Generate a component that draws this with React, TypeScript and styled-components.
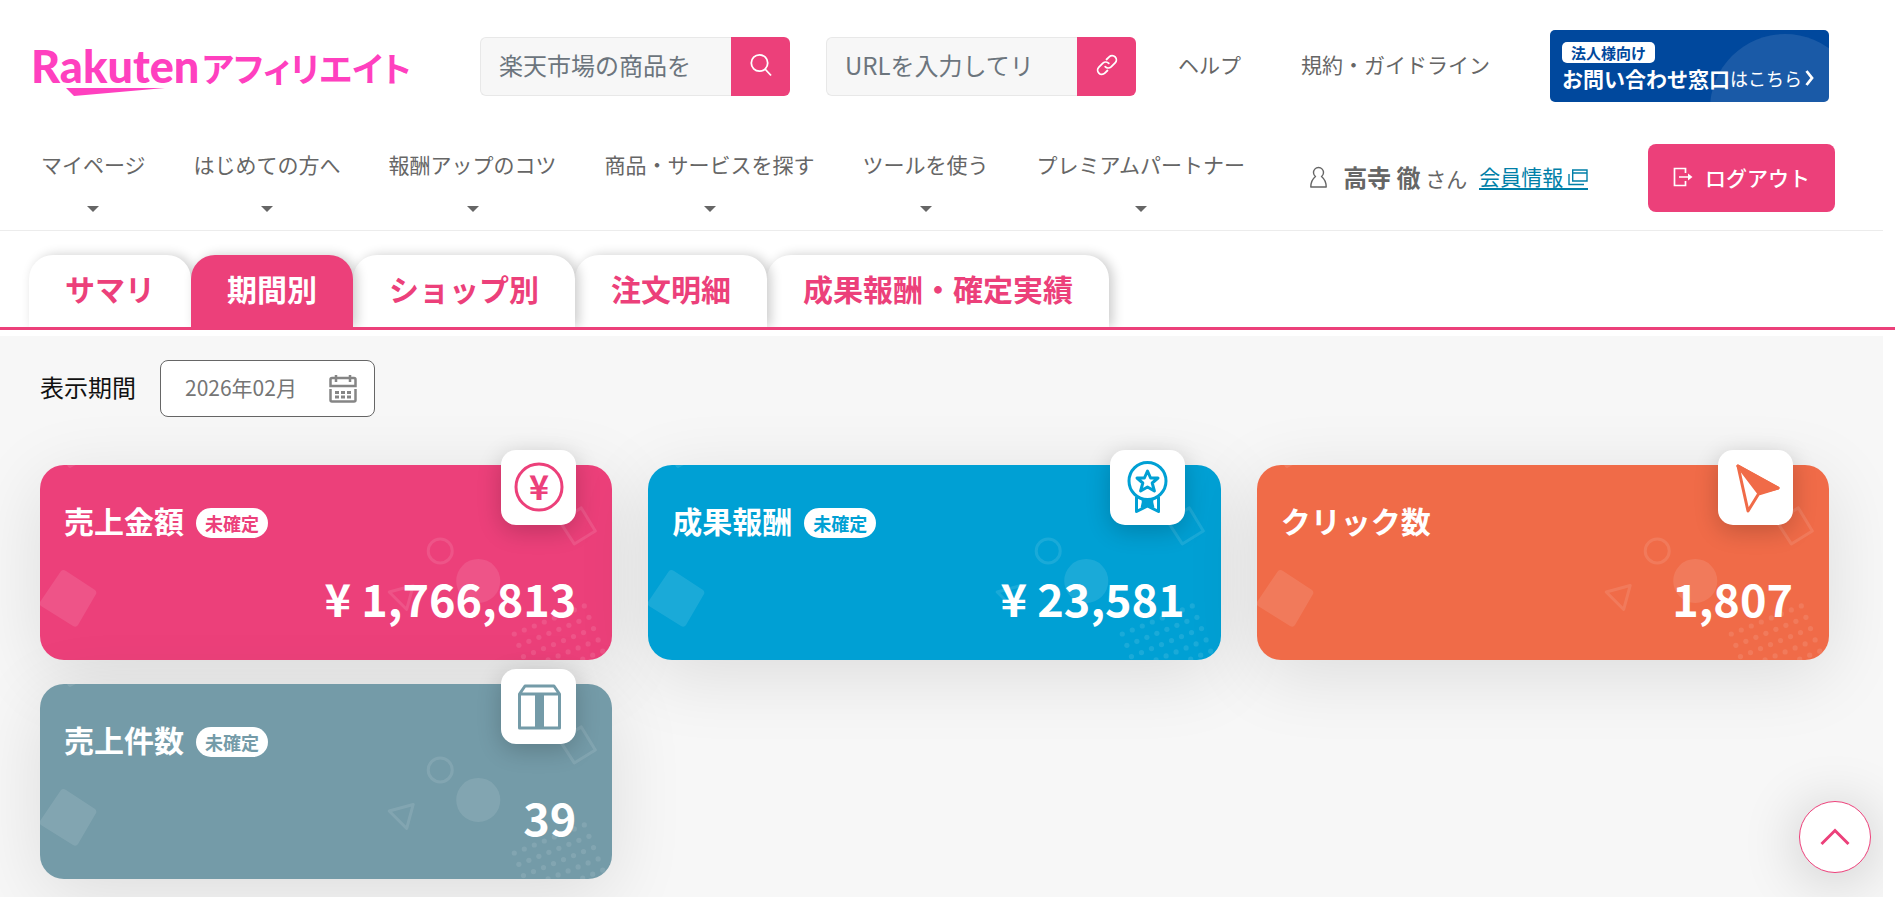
import React from "react";
import styled, { createGlobalStyle } from "styled-components";

const PINK = "#ec407a";
const GRAY = "#666666";

const GlobalStyle = createGlobalStyle`
  * { box-sizing: border-box; }
  body {
    margin: 0;
    background: #ffffff;
    color: ${GRAY};
    font-family: "Noto Sans CJK JP", "Liberation Sans", sans-serif;
    font-size: 21px;
    line-height: 32px;
  }
  button, input { font: inherit; }
  a { color: inherit; text-decoration: none; }
`;

const Page = styled.div`
  min-height: 100vh;
  display: flex;
  flex-direction: column;
  padding-right: 14px;
`;

/* ---------- header ---------- */

const Header = styled.header`
  border-bottom: 1px solid #ececec;
  padding: 30px 54px 18px 41px;
`;

const TopRow = styled.div`
  display: flex;
  align-items: center;
  height: 72px;
  margin-left: -7px;
`;

const Logo = styled.a`
  display: block;
  flex: none;
  width: 374px;
  height: 60px;
  margin-right: 72px;
  svg { display: block; overflow: visible; }
`;

const SearchForm = styled.form`
  display: flex;
  height: 59px;
  margin-right: 36px;
`;

const SearchInput = styled.input`
  width: 251px;
  padding: 0 18px 2px;
  border: 1px solid #e8e8e8;
  border-right: 0;
  border-radius: 6px 0 0 6px;
  background: #f7f7f7;
  color: #6c757d;
  font-size: 24px;
  &::placeholder { color: #6c757d; opacity: 1; }
`;

const SearchButton = styled.button`
  display: grid;
  place-items: center;
  width: 59px;
  padding: 0 0 2px;
  border: 0;
  border-radius: 0 6px 6px 0;
  background: ${PINK};
  color: #ffffff;
`;

const HelpLinks = styled.div`
  display: flex;
  gap: 60px;
  margin-left: 6px;
  padding-bottom: 4px;
  white-space: nowrap;
`;

const Banner = styled.a`
  position: relative;
  display: flex;
  flex-direction: column;
  align-items: flex-start;
  width: 279px;
  height: 72px;
  margin-left: auto;
  padding: 12px;
  border-radius: 5px;
  overflow: hidden;
  background: #00489d;
  color: #ffffff;
  white-space: nowrap;
  &::before {
    content: "";
    position: absolute;
    left: 160px;
    top: 4px;
    width: 150px;
    height: 150px;
    border-radius: 50%;
    background: rgba(255, 255, 255, 0.1);
  }
`;

const BannerTag = styled.span`
  position: relative;
  padding: 0 9px;
  border-radius: 5px;
  background: #ffffff;
  color: #00489d;
  font-size: 15px;
  font-weight: 700;
  line-height: 21px;
`;

const BannerText = styled.span`
  position: relative;
  display: flex;
  align-items: center;
  font-size: 18px;
  line-height: 30px;
  strong { font-size: 21px; }
  svg { margin-left: 3px; }
`;

const NavRow = styled.div`
  display: flex;
  align-items: center;
  margin-top: 42px;
  margin-right: -6px;
`;

const Nav = styled.nav`
  display: flex;
  gap: 48px;
  margin-right: 65px;
  padding-top: 3px;
`;

const NavItem = styled.a`
  display: flex;
  flex-direction: column;
  align-items: center;
  gap: 26px;
  white-space: nowrap;
  &::after {
    content: "";
    border: 6px solid transparent;
    border-top-color: ${GRAY};
    border-bottom: 0;
  }
`;

const User = styled.div`
  display: flex;
  align-items: center;
  padding-bottom: 2px;
  white-space: nowrap;
  svg { flex: none; }
`;

const UserName = styled.span`
  margin: 0 12px 0 16px;
  strong { font-size: 24px; }
`;

const MemberLink = styled.a`
  display: flex;
  align-items: center;
  gap: 5px;
  height: 26px;
  border-bottom: 2px solid #007fa8;
  color: #007fa8;
  line-height: 24px;
  svg { margin-top: 2px; }
`;

const Logout = styled.button`
  display: flex;
  align-items: center;
  gap: 12px;
  height: 68px;
  margin-left: auto;
  padding: 0 25px 3px;
  border: 0;
  border-radius: 8px;
  background: ${PINK};
  color: #ffffff;
  font-weight: 500;
  white-space: nowrap;
`;

/* ---------- tabs ---------- */

const Tabs = styled.nav`
  display: flex;
  align-items: flex-end;
  margin-right: -12px;
  padding: 24px 29px 0;
  border-bottom: 3px solid ${PINK};
  overflow: hidden;
`;

const Tab = styled.a<{ $active?: boolean; $level: number }>`
  position: relative;
  z-index: ${(p) => p.$level};
  height: 72px;
  padding: 0 36px;
  border-radius: 24px 24px 0 0;
  background: ${(p) => (p.$active ? PINK : "#ffffff")};
  color: ${(p) => (p.$active ? "#ffffff" : PINK)};
  box-shadow: 4px 0 12px rgba(0, 0, 0, 0.2);
  font-size: 30px;
  font-weight: 700;
  line-height: 66px;
  white-space: nowrap;
`;

/* ---------- report ---------- */

const Main = styled.main`
  flex: 1;
  margin-top: 6px;
  padding: 24px 54px 18px 40px;
  background: #f7f7f7;
  overflow: hidden;
`;

const Period = styled.div`
  display: flex;
  align-items: center;
  gap: 24px;
  margin-bottom: 48px;
  label {
    padding-bottom: 3px;
    color: #111111;
    font-size: 24px;
    white-space: nowrap;
  }
`;

const PeriodField = styled.div`
  display: flex;
  align-items: center;
  width: 215px;
  height: 57px;
  padding: 0 17px 0 24px;
  border: 1px solid ${GRAY};
  border-radius: 8px;
  background: #ffffff;
  input {
    flex: 1;
    min-width: 0;
    padding: 0 0 3px;
    border: 0;
    outline: 0;
    background: transparent;
    color: #757575;
  }
`;

const Cards = styled.div`
  display: grid;
  grid-template-columns: repeat(3, 1fr);
  gap: 24px 36px;
`;

const Card = styled.section<{ $color: string }>`
  position: relative;
  display: flex;
  flex-direction: column;
  justify-content: space-between;
  height: 195px;
  padding: 37px 36px 30px 24px;
  border-radius: 24px;
  background: ${(p) => p.$color};
  color: #ffffff;
  box-shadow: 0 15px 75px rgba(0, 0, 0, 0.11);
`;

const Pattern = styled.svg`
  position: absolute;
  inset: 0;
  width: 100%;
  height: 100%;
  border-radius: 24px;
`;

const IconTile = styled.span`
  position: absolute;
  top: -15px;
  right: 36px;
  width: 75px;
  height: 75px;
  border-radius: 15px;
  background: #ffffff;
  box-shadow: 0 6px 24px rgba(0, 0, 0, 0.2);
  svg { display: block; }
`;

const CardTitle = styled.h2`
  position: relative;
  display: flex;
  align-items: flex-end;
  gap: 12px;
  margin: 0;
  font-size: 30px;
  line-height: 36px;
`;

const Badge = styled.span<{ $color: string }>`
  padding: 0 9px;
  border-radius: 15px;
  background: #ffffff;
  color: ${(p) => p.$color};
  font-size: 18px;
  line-height: 30px;
`;

const CardValue = styled.p`
  position: relative;
  margin: 0;
  text-align: right;
  font-size: 45px;
  font-weight: 700;
  line-height: 64px;
`;

const ToTopRail = styled.div`
  position: fixed;
  right: 14px;
  bottom: 0;
  z-index: 20;
  padding: 80px 12px 24px 80px;
  overflow: hidden;
  pointer-events: none;
`;

const ToTop = styled.button`
  display: grid;
  place-items: center;
  width: 72px;
  height: 72px;
  padding: 0;
  border: 1px solid ${PINK};
  border-radius: 50%;
  background: #ffffff;
  box-shadow: 0 6px 60px rgba(0, 0, 0, 0.2);
  pointer-events: auto;
`;

/* ---------- drawings ---------- */

const RakutenLogo = () => (
  <svg width="374" height="60" viewBox="0 0 374 60" fill="#ff40bf" role="img" aria-label="Rakuten アフィリエイト">
    <text x="-3" y="47" fontFamily="Lato, sans-serif" fontWeight="900" fontSize="45">Rakuten</text>
    <text
      x="168"
      y="46"
      fontFamily='"Noto Sans CJK JP", sans-serif'
      fontWeight="700"
      fontSize="34"
      style={{ fontFeatureSettings: '"palt"' }}
    >
      アフィリエイト
    </text>
    <path d="M32 52H131L40 60Z" />
  </svg>
);

const SearchIcon = () => (
  <svg width="24" height="26" viewBox="0 0 24 26" fill="none" stroke="currentColor" strokeWidth="1.8">
    <circle cx="10.500" cy="11" r="8.200" />
    <path d="M16 17L22 23.500" />
  </svg>
);

const ChainIcon = () => (
  <svg width="24" height="24" viewBox="0 0 24 24" fill="none" stroke="currentColor" strokeWidth="1.8" strokeLinecap="round" strokeLinejoin="round">
    <path d="M10.2 13.6a4.2 4.2 0 0 0 5.9.3l4-4a4.2 4.2 0 0 0-5.9-6l-2.7 2.6" />
    <path d="M13.8 10.4a4.2 4.2 0 0 0-5.9-.3l-4 4a4.2 4.2 0 0 0 5.9 6l2.7-2.6" />
  </svg>
);

const UserIcon = () => (
  <svg width="17" height="22" viewBox="0 0 17 22" fill="none" stroke="currentColor" strokeWidth="1.4" strokeLinejoin="round">
    <path d="M5.5 10.500A5 5 0 1 1 11.500 10.500C14 12.500 16.200 16 16.200 21H.8C.8 16 3 12.500 5.500 10.500Z" />
  </svg>
);

const WindowIcon = () => (
  <svg width="20" height="17" viewBox="0 0 20 17" fill="none" stroke="currentColor" strokeWidth="1.4">
    <path d="M4.700 1H19V12H4.700ZM4.700 4H19M1 5V15.500H16" />
  </svg>
);

const LogoutIcon = () => (
  <svg width="20" height="20" viewBox="0 0 20 20" fill="none" stroke="currentColor" strokeWidth="1.7">
    <path d="M12.500 6V1.500H1.500V18.500H12.500V14M6 10H18" />
    <path d="M15 6.500L19.500 10L15 13.500Z" fill="currentColor" stroke="none" />
  </svg>
);

const CalendarIcon = () => (
  <svg width="28" height="28" viewBox="0 0 28 28" fill="none" stroke="#858585" strokeWidth="2.5">
    <path d="M1.500 11V4.500Q1.500 3 3 3H25Q26.500 3 26.500 4.500V11ZM7 0V7M21 0V7" />
    <path d="M1.500 14V25Q1.500 26.500 3 26.500H25Q26.500 26.500 26.500 25V14" />
    <path d="M6 17.500H22M6 22H22" strokeWidth="3" strokeDasharray="4 2" />
  </svg>
);

const dots = Array.from({ length: 48 }, (_, i) => ({ row: Math.floor(i / 8), col: i % 8 }));

const CardPattern = () => (
  <Pattern viewBox="0 0 572 195" preserveAspectRatio="xMaxYMax slice" fill="#ffffff" opacity="0.1" aria-hidden="true">
    <path d="M27 0H36L30 3Q28 3 27 0Z" />
    <path d="M21 106Q23 104 26 106L55 125Q57 127 56 129L38 160Q36 163 33 161L1 141Q-1 139 0 137Z" />
    <circle cx="438" cy="116" r="22" />
    <g fill="none" stroke="#ffffff" strokeWidth="3" strokeLinejoin="round">
      <circle cx="400" cy="86" r="12" />
      <path d="M349 127L373 120.500L366.500 144.500Z" />
      <path d="M541 43L555 66L534 79L519 56Z" />
    </g>
    {dots.map(({ row, col }) => (
      <circle key={`${row}-${col}`} cx={474 + col * 10 + row * 4.6} cy={169 - col * 4 + row * 11.3} r="2.6" />
    ))}
  </Pattern>
);

const YenIcon = ({ color }: { color: string }) => (
  <svg width="75" height="75" viewBox="0 0 75 75">
    <circle cx="38" cy="37" r="23" fill="none" stroke={color} strokeWidth="3" />
    <text x="38" y="50" textAnchor="middle" fontSize="34" fontWeight="700" fill={color}>¥</text>
  </svg>
);

const MedalIcon = ({ color }: { color: string }) => (
  <svg width="75" height="75" viewBox="0 0 75 75" fill="none" stroke={color} strokeWidth="3" strokeLinejoin="round">
    <circle cx="37.500" cy="31" r="18.500" />
    <path d="M37.500 21L40.600 28H48L42.200 33L44.400 41L37.500 37L30.600 41L32.800 33L27 28H34.400Z" />
    <path d="M26.500 47V61.500L37.500 56L48.500 61.500V47M34 49L32 58M41 49L43 58" />
    <path d="M33 50H42L41 55H34Z" fill={color} />
  </svg>
);

const PointerIcon = ({ color }: { color: string }) => (
  <svg width="75" height="75" viewBox="0 0 75 75" fill="none" stroke={color} strokeWidth="3" strokeLinejoin="round">
    <path d="M20 16L60 38L40.500 44L30 61Z" />
    <path d="M20 16L60 38L40.500 43Z" fill={color} />
  </svg>
);

const BoxIcon = ({ color }: { color: string }) => (
  <svg width="75" height="75" viewBox="0 0 75 75" fill="none" stroke={color} strokeWidth="3" strokeLinejoin="round">
    <path d="M18.500 25L24 17H53L58.500 25V59H18.500ZM18.500 25H58.500" />
    <path d="M38.500 25V59" strokeWidth="9" />
  </svg>
);

/* ---------- data ---------- */

const navItems = [
  "マイページ",
  "はじめての方へ",
  "報酬アップのコツ",
  "商品・サービスを探す",
  "ツールを使う",
  "プレミアムパートナー",
];

const tabs = ["サマリ", "期間別", "ショップ別", "注文明細", "成果報酬・確定実績"];
const activeTab = 1;

const cards = [
  { title: "売上金額", pending: true, value: "¥ 1,766,813", color: PINK, Icon: YenIcon },
  { title: "成果報酬", pending: true, value: "¥ 23,581", color: "#00a0d4", Icon: MedalIcon },
  { title: "クリック数", pending: false, value: "1,807", color: "#f06b48", Icon: PointerIcon },
  { title: "売上件数", pending: true, value: "39", color: "#749ba8", Icon: BoxIcon },
];

export default function App() {
  return (
    <>
      <GlobalStyle />
      <Page>
        <Header>
          <TopRow>
            <Logo href="#"><RakutenLogo /></Logo>
            <SearchForm>
              <SearchInput aria-label="商品検索" placeholder="楽天市場の商品を" />
              <SearchButton type="button" aria-label="検索"><SearchIcon /></SearchButton>
            </SearchForm>
            <SearchForm>
              <SearchInput aria-label="リンク作成" placeholder="URLを入力してリ" />
              <SearchButton type="button" aria-label="リンク"><ChainIcon /></SearchButton>
            </SearchForm>
            <HelpLinks>
              <a href="#">ヘルプ</a>
              <a href="#">規約・ガイドライン</a>
            </HelpLinks>
            <Banner href="#">
              <BannerTag>法人様向け</BannerTag>
              <BannerText>
                <strong>お問い合わせ窓口</strong>はこちら
                <svg width="9" height="16" viewBox="0 0 9 16" fill="none" stroke="currentColor" strokeWidth="2.8">
                  <path d="M1.500 1L7 8L1.500 15" />
                </svg>
              </BannerText>
            </Banner>
          </TopRow>
          <NavRow>
            <Nav>
              {navItems.map((item) => <NavItem key={item} href="#">{item}</NavItem>)}
            </Nav>
            <User>
              <UserIcon />
              <UserName><strong>高寺 徹</strong> さん</UserName>
              <MemberLink href="#">会員情報<WindowIcon /></MemberLink>
            </User>
            <Logout type="button"><LogoutIcon />ログアウト</Logout>
          </NavRow>
        </Header>

        <Tabs>
          {tabs.map((tab, i) => (
            <Tab key={tab} href="#" $active={i === activeTab} $level={i === activeTab ? 10 : tabs.length - i}>
              {tab}
            </Tab>
          ))}
        </Tabs>

        <Main>
          <Period>
            <label htmlFor="period">表示期間</label>
            <PeriodField>
              <input id="period" defaultValue="2026年02月" />
              <CalendarIcon />
            </PeriodField>
          </Period>
          <Cards>
            {cards.map(({ title, pending, value, color, Icon }) => (
              <Card key={title} $color={color}>
                <CardPattern />
                <IconTile><Icon color={color} /></IconTile>
                <CardTitle>
                  {title}
                  {pending && <Badge $color={color}>未確定</Badge>}
                </CardTitle>
                <CardValue>{value}</CardValue>
              </Card>
            ))}
          </Cards>
        </Main>
      </Page>
      <ToTopRail>
        <ToTop type="button" aria-label="ページの先頭へ">
          <svg width="30" height="18" viewBox="0 0 30 18" fill="none" stroke={PINK} strokeWidth="3">
            <path d="M1.500 16L15 2.500L28.500 16" />
          </svg>
        </ToTop>
      </ToTopRail>
    </>
  );
}
